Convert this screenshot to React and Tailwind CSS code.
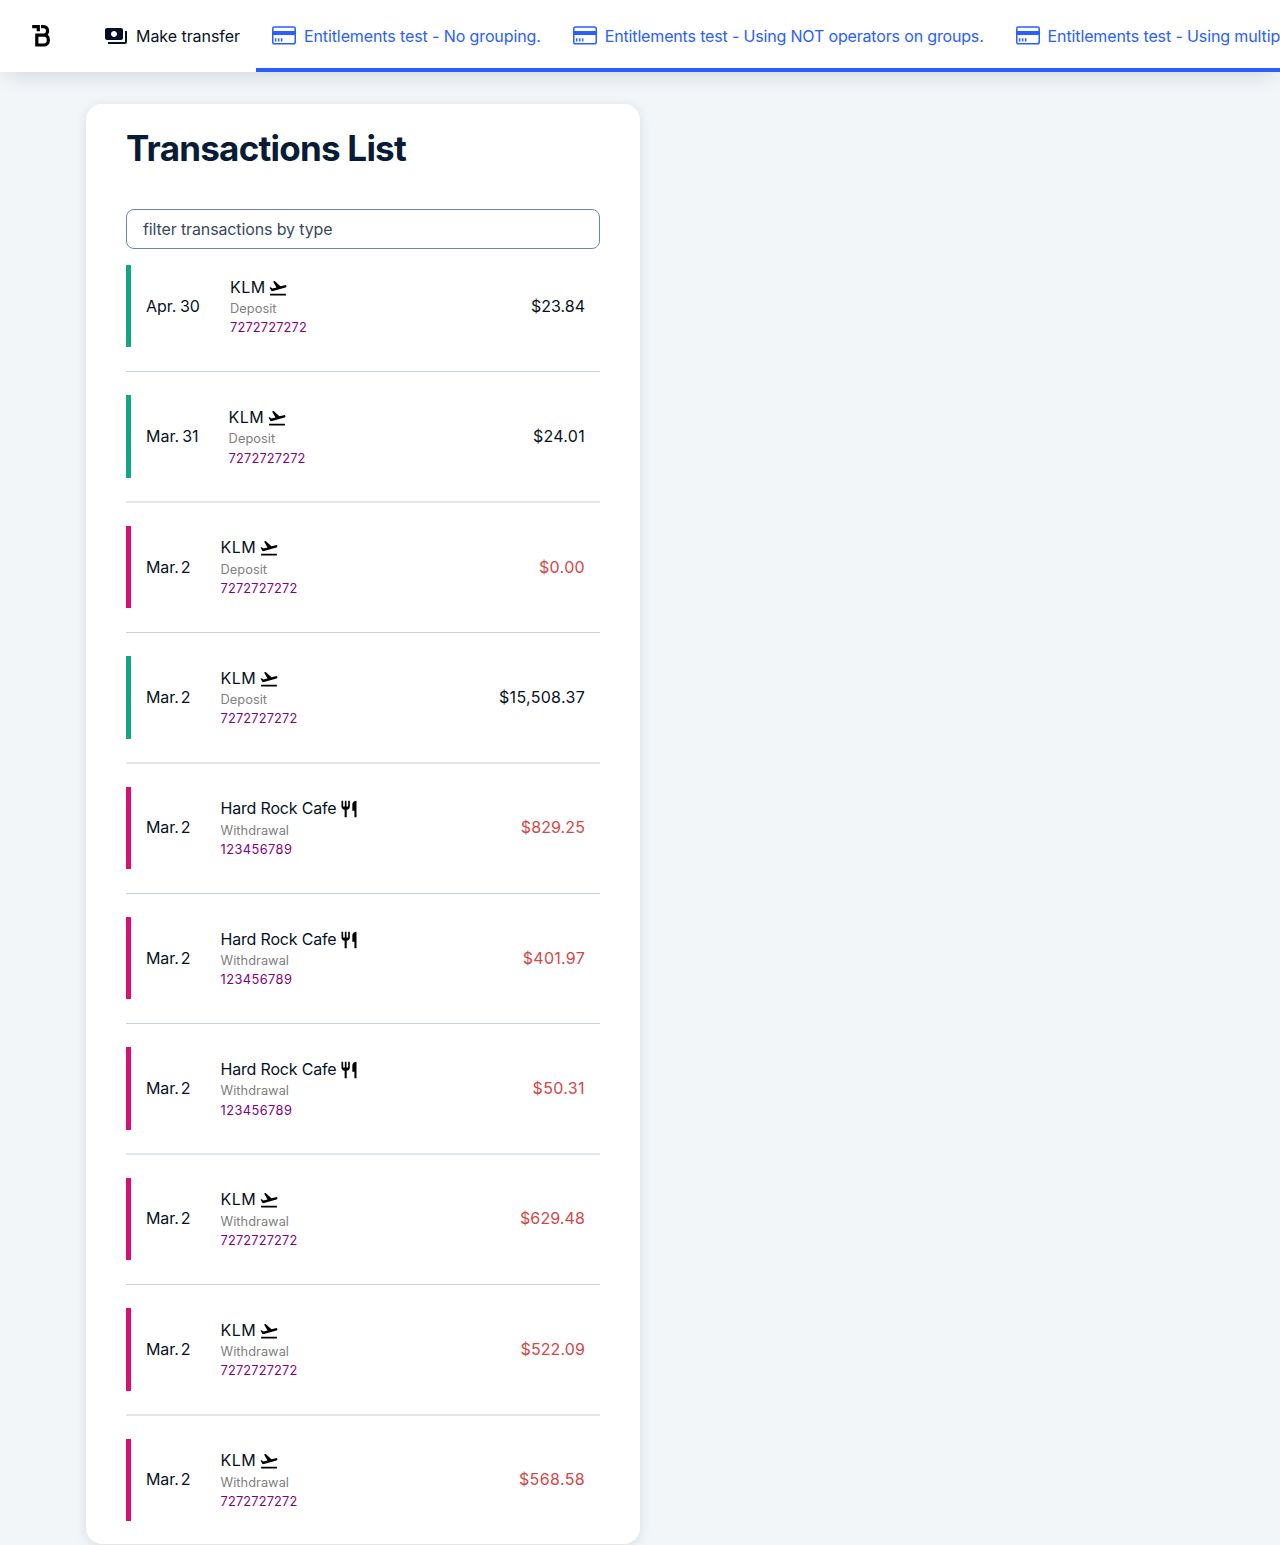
import React from "react";

const rows = [
  { date: "Apr. 30", dateCls: "w-[54px] [word-spacing:-1px]", name: "KLM", type: "Deposit", amount: "$23.84", amountCls: "tracking-[-0.005px]", credit: true },
  { date: "Mar. 31", dateCls: "w-[52.6px] [word-spacing:-1.4px]", name: "KLM", type: "Deposit", amount: "$24.01", amountCls: "tracking-[0.271px]", credit: true, soft: true },
  { date: "Mar. 2", name: "KLM", type: "Deposit", amount: "$0.00", amountCls: "tracking-[0.331px]" },
  { date: "Mar. 2", name: "KLM", type: "Deposit", amount: "$15,508.37", amountCls: "tracking-[0.307px]", credit: true, soft: true },
  { date: "Mar. 2", name: "Hard Rock Cafe", type: "Withdrawal", amount: "$829.25", amountCls: "tracking-[0.096px]" },
  { date: "Mar. 2", name: "Hard Rock Cafe", type: "Withdrawal", amount: "$401.97", amountCls: "tracking-[0.262px]" },
  { date: "Mar. 2", name: "Hard Rock Cafe", type: "Withdrawal", amount: "$50.31", amountCls: "tracking-[0.375px]", soft: true },
  { date: "Mar. 2", name: "KLM", type: "Withdrawal", amount: "$629.48", amountCls: "tracking-[0.099px]" },
  { date: "Mar. 2", name: "KLM", type: "Withdrawal", amount: "$522.09", amountCls: "tracking-[0.11px]", soft: true },
  { date: "Mar. 2", name: "KLM", type: "Withdrawal", amount: "$568.58", amountCls: "tracking-[0.363px]" },
];

function Logo() {
  return (
    <svg width="20" height="24" viewBox="0 0 20 24" className="shrink-0" fill="none" stroke="#000" strokeWidth="3.2">
      <path d="M0.2 2.6H6.3V7.200" />
      <path d="M9 2.6H11.6A3.9 3.9 0 0 1 15.5 6.500V7.200A3.7 3.7 0 0 1 11.8 11.100H4.8V21H12A4.2 4.2 0 0 0 16.3 16.8V15.200A4.1 4.1 0 0 0 12.2 11.100" />
    </svg>
  );
}

function TransferIcon() {
  return (
    <svg width="24" height="24" viewBox="0 0 24 24" className="shrink-0" fill="currentColor">
      <path d="M19 14V6c0-1.1-.9-2-2-2H3c-1.1 0-2 .9-2 2v8c0 1.1.9 2 2 2h14c1.100 0 2-.9 2-2zm-9-1c-1.660 0-3-1.340-3-3s1.340-3 3-3 3 1.340 3 3-1.340 3-3 3zm13-6v11c0 1.100-.9 2-2 2H4v-2h17V7h2z" />
    </svg>
  );
}

function CardIcon() {
  return (
    <svg width="24" height="24" viewBox="0 0 24 24" className="shrink-0">
      <rect x="0.75" y="2.95" width="22.5" height="16.8" rx="1.8" fill="none" stroke="currentColor" strokeWidth="1.5" />
      <path d="M0.6 7H23.4V11H0.6zM2.900 14.200H4.400V17.400H2.900zM5.900 14.200H7.400V17.400H5.900zM8.900 14.200H10.400V17.400H8.900z" fill="currentColor" />
    </svg>
  );
}

function MerchantIcon({ name }) {
  return (
    <svg width="20" height="20" viewBox="0 0 24 24" className="relative top-px ml-[2.7px] shrink-0" fill="#000">
      {name === "KLM" ? (
        <path d="M2.500 19h19v2h-19zm19.570-9.360c-.21-.8-1.040-1.280-1.840-1.060L14.920 10l-6.900-6.430-1.930.51 4.140 7.170-4.970 1.330-1.970-1.540-1.450.39 1.820 3.160.77 1.330 1.600-.43 5.310-1.420 4.350-1.160L21 11.490c.81-.23 1.280-1.050 1.070-1.850z" />
      ) : (
        <path d="M11 9H9V2H7v7H5V2H3v7c0 2.120 1.660 3.840 3.750 3.970V22h2.500v-9.030C11.340 12.840 13 11.120 13 9V2h-2v7zm5-3v8h2.500v8H21V2c-2.760 0-5 2.240-5 4z" />
      )}
    </svg>
  );
}

function Entitlement({ text, className }) {
  return (
    <a className={"flex h-[72px] shrink-0 items-center gap-2 whitespace-nowrap border-b-4 border-[#295eff] px-4 pt-1 text-[#295eff] " + className}>
      <CardIcon />
      <span>{text}</span>
    </a>
  );
}

function Row({ row, last }) {
  const klm = row.name === "KLM";
  return (
    <li className={last ? "h-[82.4px]" : "h-[130.4px]"}>
      <div className={"flex h-[82.4px] items-center border-l-[5px] px-[15px] " + (row.credit ? "border-[#14a583]" : "border-[#d90f73]")}>
        <div className={"mb-[0.9px] shrink-0 whitespace-nowrap " + (row.dateCls || "w-[44.5px] tracking-[-0.1px] [word-spacing:-2.2px]")}>{row.date}</div>
        <div className="ml-[30px] grow">
          <div className="-mt-[0.45px] mb-[0.45px] flex h-6 items-center">
            <span className={klm ? "tracking-[0.417px]" : "tracking-[-0.176px]"}>{row.name}</span>
            <MerchantIcon name={row.name} />
          </div>
          <div className={"text-[12.8px] leading-[19.2px] text-[#808080] " + (row.type === "Deposit" ? "tracking-[0.05px]" : "tracking-[0.044px]")}>{row.type}</div>
          <div className={"text-[12.8px] leading-[19.2px] text-[#800080] " + (klm ? "tracking-[0.177px]" : "tracking-[0.444px]")}>{klm ? "7272727272" : "123456789"}</div>
        </div>
        <div className={"mb-[0.9px] " + row.amountCls + (row.credit ? "" : " text-[#d24747]")}>{row.amount}</div>
      </div>
      {!last && <div className={row.soft ? "mt-[23.6px] h-[2px] bg-[#e2e7eb]" : "mt-6 h-px bg-[#c8d2da]"} />}
    </li>
  );
}

export default function App() {
  return (
    <div className="h-[1545px] w-[1280px] overflow-hidden bg-[#f2f6f9] font-['Inter',sans-serif] text-base leading-6 text-[#061223]">
      <header className="relative flex h-[72px] items-center bg-white shadow-[0_10px_20px_-6px_rgba(10,25,35,0.13)]">
        <div className="w-[88px] shrink-0 pl-8">
          <Logo />
        </div>
        <nav className="flex w-[1192px] overflow-hidden">
          <a className="flex h-[72px] w-[168px] shrink-0 items-center gap-2 whitespace-nowrap px-4 tracking-[-0.049px]">
            <TransferIcon />
            <span>Make transfer</span>
          </a>
          <Entitlement text="Entitlements test - No grouping." className="w-[300.8px] tracking-[-0.109px]" />
          <Entitlement text="Entitlements test - Using NOT operators on groups." className="w-[442.8px] tracking-[-0.162px]" />
          <Entitlement text="Entitlements test - Using multiple groups." className="tracking-[-0.121px]" />
        </nav>
      </header>
      <main className="ml-[86px] mt-8 h-[1440px] w-[554px] rounded-2xl bg-white px-10 pt-5 shadow-[0_2px_12px_rgba(20,45,65,0.12)]">
        <h1 className="h-12 whitespace-nowrap text-[35px] font-bold leading-[48px] tracking-[-0.76px] text-[#091c35]">Transactions List</h1>
        <input
          type="text"
          placeholder="filter transactions by type"
          className="mt-[37px] block h-10 w-full rounded-lg border border-[#6b85a8] bg-white px-4 tracking-[-0.124px] outline-none placeholder:text-[#3a495d]"
        />
        <ul className="mt-4">
          {rows.map((row, i) => (
            <Row key={i} row={row} last={i === rows.length - 1} />
          ))}
        </ul>
      </main>
    </div>
  );
}
